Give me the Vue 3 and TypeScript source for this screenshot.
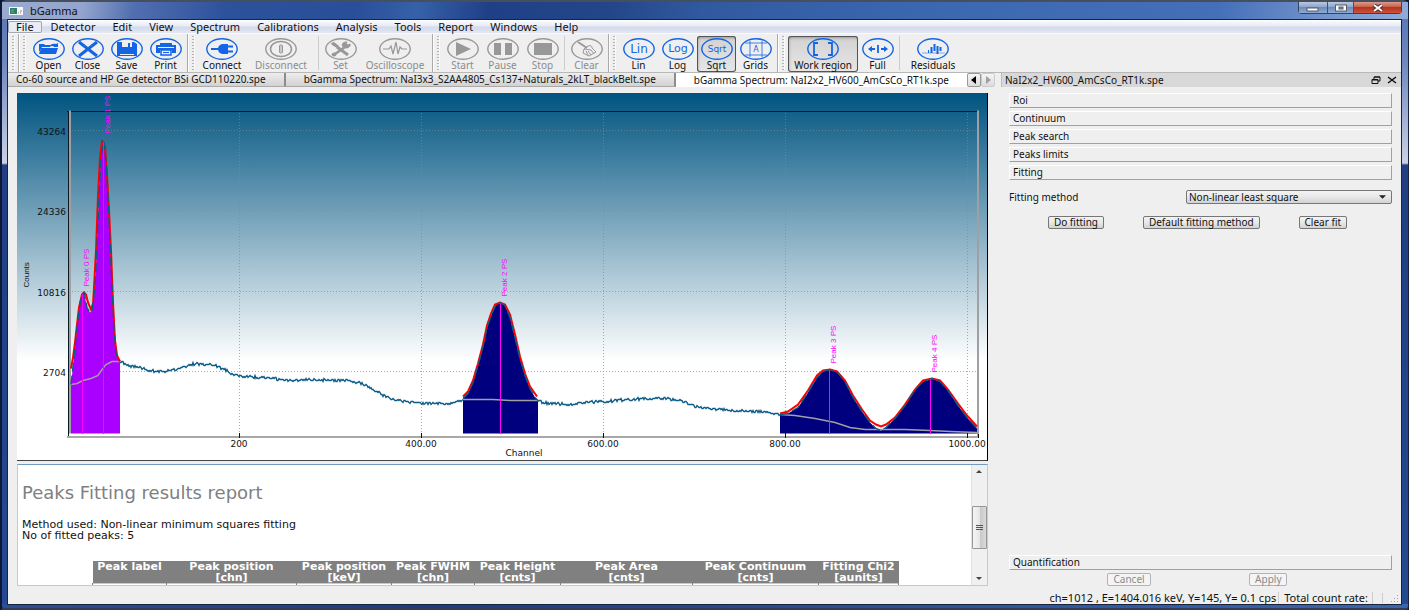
<script setup lang="ts">
import { ref } from 'vue'

type Point = [number, number]

interface Tool {
  icon: string
  label: string
  size: string
  disabled?: boolean
  pressed?: boolean
  divider?: boolean
}

const menus = ['File', 'Detector', 'Edit', 'View', 'Spectrum', 'Calibrations', 'Analysis', 'Tools', 'Report', 'Windows', 'Help']

const toolGroups: Tool[][] = [
  [
    { icon: 'open', label: 'Open', size: 'small' },
    { icon: 'close', label: 'Close', size: 'small' },
    { icon: 'save', label: 'Save', size: 'small' },
    { icon: 'print', label: 'Print', size: 'small' },
  ],
  [
    { icon: 'connect', label: 'Connect', size: 'medium' },
    { icon: 'disconnect', label: 'Disconnect', size: 'large', disabled: true, divider: true },
    { icon: 'set', label: 'Set', size: 'small', disabled: true },
    { icon: 'scope', label: 'Oscilloscope', size: 'large', disabled: true },
  ],
  [
    { icon: 'start', label: 'Start', size: 'small', disabled: true },
    { icon: 'pause', label: 'Pause', size: 'normal', disabled: true },
    { icon: 'stop', label: 'Stop', size: 'small', disabled: true, divider: true },
    { icon: 'clear', label: 'Clear', size: 'small', disabled: true },
  ],
  [
    { icon: 'lin', label: 'Lin', size: 'small' },
    { icon: 'log', label: 'Log', size: 'small' },
    { icon: 'sqrt', label: 'Sqrt', size: 'small', pressed: true },
    { icon: 'grids', label: 'Grids', size: 'small' },
  ],
  [
    { icon: 'region', label: 'Work region', size: 'large', pressed: true },
    { icon: 'full', label: 'Full', size: 'small', divider: true },
    { icon: 'residuals', label: 'Residuals', size: 'wide' },
  ],
]

const tabs = [
  'Co-60 source and HP Ge detector BSi GCD110220.spe',
  'bGamma Spectrum: NaI3x3_S2AA4805_Cs137+Naturals_2kLT_blackBelt.spe',
  'bGamma Spectrum: NaI2x2_HV600_AmCsCo_RT1k.spe',
]
const activeTab = ref(2)

const sections = ['Roi', 'Continuum', 'Peak search', 'Peaks limits', 'Fitting']
const method = ref('Non-linear least square')

const columns = [
  { name: 'Peak label', unit: '', width: 74 },
  { name: 'Peak position', unit: '[chn]', width: 130 },
  { name: 'Peak position', unit: '[keV]', width: 95 },
  { name: 'Peak FWHM', unit: '[chn]', width: 83 },
  { name: 'Peak Height', unit: '[cnts]', width: 86 },
  { name: 'Peak Area', unit: '[cnts]', width: 132 },
  { name: 'Peak Continuum', unit: '[cnts]', width: 126 },
  { name: 'Fitting Chi2', unit: '[aunits]', width: 80 },
]

const yTicks = [
  { y: 130, text: '43264' },
  { y: 210, text: '24336' },
  { y: 291, text: '10816' },
  { y: 371, text: '2704' },
]
const xTicks = [
  { x: 239, text: '200' },
  { x: 421, text: '400.00' },
  { x: 603, text: '600.00' },
  { x: 785, text: '800.00' },
  { x: 967, text: '1000.00' },
]

const low: Point[] = [[71, 384], [74, 357], [77, 327], [80, 303], [82, 294], [84, 292], [87, 307], [90, 312], [92, 310], [95, 287], [97, 245], [99, 197], [101, 157], [103, 141], [104, 142], [106, 160], [108, 195], [110, 240], [112, 285], [114, 327], [116, 353], [120, 361]]
const lowFit: Point[] = [[71, 368], [73, 357], [75, 342], [77, 324], [79, 307], [82, 294], [84, 292], [86, 294], [88, 302], [91, 309], [93, 303], [94, 287], [96, 250], [98, 195], [100, 157], [102, 141], [105, 146], [107, 175], [109, 210], [111, 250], [113, 302], [115, 340], [117, 355], [120, 361]]
const mid: Point[] = [[463, 398], [468, 393], [473, 382], [478, 365], [483, 346], [487, 327], [492, 313], [496, 304], [500, 302], [505, 305], [510, 317], [515, 337], [520, 358], [525, 375], [530, 388], [535, 397], [538, 400]]
const midFit: Point[] = [[463, 396], [468, 391], [473, 380], [478, 363], [483, 344], [487, 325], [491, 313], [495, 304], [500, 302], [505, 304], [510, 314], [515, 334], [520, 356], [525, 373], [530, 386], [537, 396]]
const high: Point[] = [[780, 414], [788, 413], [798, 407], [808, 392], [817, 377], [823, 371], [830, 369], [837, 371], [845, 381], [853, 397], [862, 411], [870, 422], [876, 428], [881, 430], [886, 427], [895, 418], [905, 405], [915, 389], [923, 381], [932, 378], [940, 381], [948, 390], [958, 405], [967, 417], [977, 428]]
const highFit: Point[] = [[780, 413], [788, 411], [798, 404], [808, 390], [817, 375], [823, 370], [830, 369], [837, 371], [845, 380], [853, 395], [862, 409], [870, 420], [876, 424], [881, 426], [886, 424], [895, 417], [905, 404], [915, 389], [923, 380], [932, 378], [940, 380], [948, 389], [958, 403], [967, 415], [977, 426]]

const tailA: Point[] = [[120, 361], [128, 365], [140, 367], [150, 370], [165, 371], [178, 369], [190, 364], [196, 363], [205, 364], [214, 364], [222, 368], [232, 373], [240, 376], [262, 377], [290, 380], [310, 379], [345, 380], [362, 383], [378, 392], [390, 398], [400, 400], [421, 403], [435, 403], [452, 403], [463, 399]]
const tailB: Point[] = [[538, 400], [543, 402], [552, 403], [570, 404], [585, 402], [605, 401], [625, 399], [650, 398], [665, 398], [680, 400], [695, 406], [710, 408], [735, 410], [760, 411], [780, 414]]

const continuum: Point[][] = [
  [[71, 384], [77, 383], [83, 380], [91, 378], [98, 375], [102, 369], [106, 364], [112, 361], [120, 361]],
  [[463, 399], [493, 399], [510, 400], [538, 400]],
  [[780, 414], [795, 415], [815, 418], [835, 422], [850, 427], [865, 429], [880, 429], [905, 429], [930, 430], [950, 431], [977, 432]],
]

const peaks = [
  { x: 82, top: 293, label: 'Peak 0 PS', textX: 89, textY: 286 },
  { x: 103, top: 141, label: 'Peak 1 PS', textX: 110, textY: 133 },
  { x: 500, top: 302, label: 'Peak 2 PS', textX: 507, textY: 296 },
  { x: 829, top: 369, label: 'Peak 3 PS', textX: 836, textY: 363 },
  { x: 930, top: 378, label: 'Peak 4 PS', textX: 937, textY: 372 },
]

const line = (points: Point[]): string => points.map((p) => p.join(',')).join(' ')
const area = (points: Point[]): string =>
  `${points[0][0]},433 ${line(points)} ${points[points.length - 1][0]},433`

/* Counting noise: one rounded sample per pixel along the smooth baseline. */
function noisy(points: Point[]): string {
  const out: Point[] = []
  let seed = 17
  for (let i = 0; i < points.length - 1; i++) {
    const [x0, y0] = points[i]
    const [x1, y1] = points[i + 1]
    for (let x = x0; x < x1; x++) {
      seed = (seed * 1103515245 + 12345) % 2147483648
      const jitter = (seed / 2147483648 - 0.5) * 2.6
      out.push([x, Math.round(y0 + ((y1 - y0) * (x - x0)) / (x1 - x0) + jitter)])
    }
  }
  out.push(points[points.length - 1])
  return line(out)
}
</script>

<template>
  <div class="window">
    <header class="titlebar">
      <svg class="app-icon" viewBox="0 0 14 8" aria-hidden="true">
        <rect width="14" height="8" fill="#f4f6f8" />
        <rect x="1" y="1" width="7" height="6" fill="#2f7d6b" />
        <rect x="2" y="2" width="3" height="4" fill="#3f9a78" />
        <path d="M9 6h1M11 6h1M12 3v2" stroke="#8a8a9a" />
      </svg>
      <h1 class="app-name">bGamma</h1>
      <div class="window-buttons">
        <button class="win-btn minimise" aria-label="Minimize">
          <svg viewBox="0 0 14 8"><rect x="1" y="4" width="11" height="3" fill="#fff" stroke="#555b6b" /></svg>
        </button>
        <button class="win-btn maximise" aria-label="Maximize">
          <svg viewBox="0 0 14 8"><rect x="1.500" y="1" width="11" height="6" fill="#fff" stroke="#555b6b" /><rect x="5" y="3" width="4" height="2" fill="#8093b8" stroke="#555b6b" /></svg>
        </button>
        <button class="win-btn quit" aria-label="Close window">
          <svg viewBox="0 0 14 8"><path d="M3 1l8 6M11 1l-8 6" stroke="#4a3038" stroke-width="4" /><path d="M3 1l8 6M11 1l-8 6" stroke="#fff" stroke-width="2" /></svg>
        </button>
      </div>
    </header>

    <div class="client">
      <nav class="menubar">
        <button v-for="(menu, i) in menus" :key="menu" class="menu" :class="{ hot: i === 0 }">{{ menu }}</button>
      </nav>

      <div class="toolbar">
        <span class="handle first"></span>
        <div v-for="(group, g) in toolGroups" :key="g" class="tool-group">
          <span class="handle"></span>
          <template v-for="tool in group" :key="tool.label">
            <button class="tool" :class="[tool.size, { pressed: tool.pressed }]" :disabled="tool.disabled">
              <svg class="tool-icon" viewBox="0 0 32 22" fill="none" stroke="currentColor" aria-hidden="true">
                <ellipse cx="16" cy="11" rx="15.200" ry="10.200" stroke-width="1.400" />
                <g v-if="tool.icon === 'open'" fill="currentColor" stroke="none">
                  <path d="M6 6h5l1 1h5v2H9l-3 5z" />
                  <path d="M8 10h17l-2 6H6z" />
                  <path d="M15 9c3-3 5-4 8-3l2-1v4h-5l1-1c-2 0-3 0-6 1z" />
                </g>
                <path v-else-if="tool.icon === 'close'" d="M7 4l18 14M25 4L7 18" stroke-width="3" />
                <g v-else-if="tool.icon === 'save'">
                  <path d="M6 4h17l3 2v12H6z" fill="currentColor" stroke="none" />
                  <path d="M11 4h10v5H11z" fill="#efefef" stroke="none" />
                  <path d="M17 5h2v4h-2z" fill="currentColor" stroke="none" />
                  <path d="M9 16.500h14" stroke="#efefef" />
                </g>
                <g v-else-if="tool.icon === 'print'">
                  <path d="M10 5h12v3H10zM6 7h4v1h12V7h4v8h-4v-3H10v3H6z" fill="currentColor" stroke="none" />
                  <path d="M11 12h10v5H11z" fill="#efefef" stroke-width="1.500" />
                  <path d="M8 9.500h16" stroke="#efefef" />
                  <path d="M13 14.500h6" />
                </g>
                <g v-else-if="tool.icon === 'connect'">
                  <path d="M5 11h9M21 8.500h6M21 13.500h6" stroke-width="2" />
                  <path d="M22 6v10h-4c-4 0-6-2-6-5s2-5 6-5z" fill="currentColor" stroke="none" />
                </g>
                <g v-else-if="tool.icon === 'disconnect'">
                  <ellipse cx="16" cy="11" rx="10.500" ry="7.500" stroke-width="1.500" />
                  <rect x="14.500" y="7" width="3" height="8" rx="1" fill="#c8c8c8" />
                </g>
                <g v-else-if="tool.icon === 'set'">
                  <path d="M12 9l11 8" stroke-width="3" />
                  <path d="M20 9L10 16" stroke-width="2.500" />
                  <path d="M25 6a4 3 0 1 1-3-2l-1 2 2 1z" fill="currentColor" />
                  <path d="M6 5l3-1 5 4-2 2-5-3z" fill="currentColor" stroke="none" />
                  <ellipse cx="9" cy="16.500" rx="2" ry="1.500" fill="currentColor" />
                </g>
                <path v-else-if="tool.icon === 'scope'" d="M4 11h6l2-3 2 8 3-12 2 12 2-7 2 2h5" stroke-width="1.200" />
                <path v-else-if="tool.icon === 'start'" d="M9 4v14l15-7z" fill="currentColor" stroke="none" />
                <path v-else-if="tool.icon === 'pause'" d="M7 5h7v12H7zM18 5h7v12h-7z" fill="currentColor" stroke="none" />
                <path v-else-if="tool.icon === 'stop'" d="M7 5h18v12H7z" fill="currentColor" stroke="none" />
                <g v-else-if="tool.icon === 'clear'">
                  <path d="M7 4l9 6" stroke-width="2" />
                  <path d="M17 8c3-1 4 0 4 2l4 4-7 4-6-3 1-4z" />
                  <path d="M13 11l7 1M17 13l3 4M15 13l2 4M20 12l3 4" />
                </g>
                <text v-else-if="tool.icon === 'lin'" class="glyph big" x="16" y="15">Lin</text>
                <text v-else-if="tool.icon === 'log'" class="glyph large" x="16" y="14">Log</text>
                <text v-else-if="tool.icon === 'sqrt'" class="glyph" x="16" y="14">Sqrt</text>
                <g v-else-if="tool.icon === 'grids'">
                  <path d="M10 3v16M22 3v16M5 5h22M5 17h22" stroke-width=".800" />
                  <text class="glyph tiny" x="16" y="14">A</text>
                </g>
                <path v-else-if="tool.icon === 'region'" d="M11 5H7v12h4M21 5h4v12h-4" stroke-width="1.800" />
                <g v-else-if="tool.icon === 'full'">
                  <path d="M16 7v8M8 11h5M19 11h5" stroke-width="1.800" />
                  <path d="M6 11l4-3v6zM26 11l-4-3v6z" fill="currentColor" stroke="none" />
                </g>
                <g v-else>
                  <path d="M5 15h23" stroke-width=".500" />
                  <path d="M14.500 9v6M17.500 6v7M20.500 8v8M23.500 9v4" stroke-width="2" />
                  <path d="M11.500 12v3" />
                </g>
              </svg>
              <span class="tool-label">{{ tool.label }}</span>
            </button>
            <span v-if="tool.divider" class="divider"></span>
          </template>
        </div>
      </div>

      <main class="body">
        <section class="workspace">
          <div class="tabstrip">
            <button v-for="(tab, i) in tabs" :key="tab" class="tab" :class="{ active: i === activeTab }" @click="activeTab = i">{{ tab }}</button>
            <button class="tab-scroll" aria-label="Scroll tabs left">
              <svg viewBox="0 0 8 8"><path d="M6 0v8L1 4z" fill="#000" /></svg>
            </button>
            <button class="tab-scroll off" aria-label="Scroll tabs right" disabled>
              <svg viewBox="0 0 8 8"><path d="M2 0v8l5-4z" fill="#a0a0a0" /></svg>
            </button>
          </div>

          <div class="chart">
            <svg class="plot" viewBox="17 93 970 366" role="img" aria-label="Spectrum counts by channel">
              <g class="grid">
                <line v-for="t in yTicks" :key="t.y" x1="69" x2="978" :y1="t.y" :y2="t.y" />
                <line v-for="t in xTicks" :key="t.x" :x1="t.x" :x2="t.x" y1="112" y2="433" />
              </g>
              <path class="frame" d="M67 111H979M68 111V437" />
              <path class="axis" d="M67 436.500H979" />
              <path class="cursor" d="M70 110V433M978 110V437" />
              <path class="tick" d="M239 432v5M421 432v5M603 432v5M785 432v5M967 432v5M978 433v4" />
              <polygon class="low" :points="area(low)" />
              <polygon class="roi" :points="area(mid)" />
              <polygon class="roi" :points="area(high)" />
              <polyline class="spectrum" :points="noisy(tailA)" />
              <polyline class="spectrum" :points="noisy(tailB)" />
              <polyline v-for="(c, i) in continuum" :key="i" class="continuum" :points="line(c)" />
              <polyline v-for="(c, i) in [lowFit, midFit, highFit]" :key="i" class="fit" :points="line(c)" />
              <polyline v-for="(c, i) in [low, mid, high]" :key="i" class="edge" :points="line(c)" />
              <g v-for="p in peaks" :key="p.label">
                <line class="marker" :x1="p.x" :x2="p.x" :y1="p.top" y2="433" />
                <text class="peak-label" :transform="`translate(${p.textX} ${p.textY}) rotate(-90)`">{{ p.label }}</text>
              </g>
              <text v-for="t in yTicks" :key="t.text" class="scale end" x="66" :y="t.y + 4">{{ t.text }}</text>
              <text v-for="t in xTicks" :key="t.text" class="scale mid" :x="t.x" y="446">{{ t.text }}</text>
              <text class="scale mid" x="524" y="455">Channel</text>
              <text class="counts" transform="translate(29 287) rotate(-90)">Counts</text>
            </svg>
          </div>

          <div class="report">
            <div class="report-page">
              <h2>Peaks Fitting results report</h2>
              <p>Method used: Non-linear minimum squares fitting<br />No of fitted peaks: 5</p>
              <table>
                <colgroup>
                  <col v-for="(c, i) in columns" :key="i" :style="{ width: c.width + 'px' }" />
                </colgroup>
                <thead>
                  <tr>
                    <th v-for="(c, i) in columns" :key="i" scope="col">{{ c.name }}<br />{{ c.unit }}</th>
                  </tr>
                </thead>
                <tbody>
                  <tr><td v-for="(c, i) in columns" :key="i"></td></tr>
                </tbody>
              </table>
            </div>
            <div class="scrollbar" aria-hidden="true">
              <svg class="arrow" viewBox="0 0 8 4"><path d="M1 4h6L4 1z" fill="#444" /></svg>
              <div class="thumb"><i></i><i></i><i></i></div>
              <svg class="arrow" viewBox="0 0 8 4"><path d="M1 0h6L4 3z" fill="#444" /></svg>
            </div>
          </div>
        </section>

        <aside class="dock">
          <div class="dock-title">
            <h2>NaI2x2_HV600_AmCsCo_RT1k.spe</h2>
            <button class="dock-btn" aria-label="Float panel">
              <svg viewBox="0 0 10 8" fill="none" stroke="#111"><path d="M3 3V1h6v4H7" /><path d="M1 3.500h6v4H1zM1 4h6M3 1h6" /></svg>
            </button>
            <button class="dock-btn" aria-label="Close panel">
              <svg viewBox="0 0 10 8" fill="none" stroke="#111" stroke-width="1.500"><path d="M1 1l8 6M9 1L1 7" /></svg>
            </button>
          </div>
          <div class="dock-body">
            <div class="sections">
              <button v-for="s in sections" :key="s" class="section">{{ s }}</button>
            </div>
            <div class="method-row">
              <label for="method">Fitting method</label>
              <div class="select-box">
                <select id="method" v-model="method">
                  <option>Non-linear least square</option>
                </select>
                <svg class="select-arrow" viewBox="0 0 8 4" aria-hidden="true"><path d="M0 0h8L4 4z" fill="#222" /></svg>
              </div>
            </div>
            <div class="actions">
              <button class="push">Do fitting</button>
              <button class="push">Default fitting method</button>
              <button class="push">Clear fit</button>
            </div>
            <button class="section last">Quantification</button>
            <div class="actions confirm">
              <button class="push" disabled>Cancel</button>
              <button class="push" disabled>Apply</button>
            </div>
          </div>
        </aside>
      </main>

      <footer class="statusbar">
        <span class="cell">ch=1012 , E=1404.016 keV, Y=145, Y= 0.1 cps</span>
        <span class="cell">Total count rate:</span>
        <span class="cell blank"></span>
        <svg class="grip" viewBox="0 0 8 8" aria-hidden="true"><path d="M6 0h1v1H6zM3 3h1v1H3zM6 3h1v1H6zM0 6h1v1H0zM3 6h1v1H3zM6 6h1v1H6z" fill="#a8a8a8" /></svg>
      </footer>
    </div>
  </div>
</template>

<style>
body {
  margin: 0;
  background: #0b1638;
}
</style>

<style scoped>
* {
  box-sizing: border-box;
}
button,
select {
  margin: 0;
  padding: 0;
  border: 0;
  background: none;
  color: inherit;
  font: inherit;
}
h1,
h2,
p {
  margin: 0;
  font-weight: normal;
  font-size: inherit;
}
.window {
  display: flex;
  flex-direction: column;
  height: 100vh;
  padding: 0 6px 3px 5px;
  border: 1px solid #17233f;
  border-top: 2px solid #454f5e;
  border-bottom: 2px solid #343b58;
  border-left: 2px solid #0d1838;
  border-radius: 6px 6px 4px 4px;
  background:
    linear-gradient(90deg, #2b4f93, #1d3c80 30%, #2b559f 70%, #3b66ad) bottom / 100% 4px no-repeat,
    linear-gradient(#5474b4, #6f88be 60px, #c9d1e6 161px, #8192bc 162px, #213f82 163px, #244a90 100%);
  font: 10px/12px "Noto Sans", "DejaVu Sans", sans-serif;
  color: #111;
}
.titlebar {
  display: flex;
  align-items: center;
  height: 17px;
  margin: 0 -6px 0 -5px;
  padding-left: 7px;
  background: linear-gradient(100deg, #9aa9ce 0, #94a5cd 80px, #526fb0 130px, #2d529c 220px, #2a4f9a 350px, #3661a8 410px, #1f4087 480px, #234689 600px, #31599f 690px, #3b67b1 900px, #456fb8 1200px, #7d9dd0 1330px, #8fabd8);
}
.app-icon {
  width: 14px;
  height: 8px;
  margin-right: 7px;
}
.app-name {
  font-size: 11px;
  line-height: 15px;
}
.window-buttons {
  display: flex;
  align-self: flex-start;
  height: 12px;
  margin-left: auto;
  margin-right: 6px;
  border: 1px solid #36435f;
  border-top: 0;
  border-radius: 0 0 4px 4px;
}
.win-btn {
  display: flex;
  align-items: center;
  justify-content: center;
  width: 28px;
  background: linear-gradient(#b8c8e2, #8ea6cc 45%, #6e8cbd 50%, #8eabd6);
}
.win-btn.maximise {
  width: 26px;
  border-left: 1px solid #43536f;
}
.win-btn.quit {
  width: 48px;
  border-left: 1px solid #43536f;
  background: linear-gradient(#dc9a8c, #ca5f48 45%, #b3341f 50%, #d0503a);
}
.win-btn svg {
  width: 14px;
  height: 8px;
}
.client {
  display: flex;
  flex: 1;
  flex-direction: column;
  min-height: 0;
  border: 1px solid #1a2338;
  background: #efefef;
}
.menubar {
  display: flex;
  flex: none;
  gap: 1px;
  height: 14px;
  border-top: 1px solid #fff;
  border-bottom: 1px solid #fafafa;
  background: linear-gradient(#f8f9fd, #e9ecf7 40%, #d4daec 50%, #e3e6f4);
  font-size: 11px;
}
.menu {
  padding: 0 8px;
  line-height: 12px;
  border-radius: 2px;
}
.menu.hot {
  box-shadow: inset 0 0 0 1px #a2a6b2;
  background: #e9ecf5;
}
.toolbar {
  display: flex;
  flex: none;
  height: 39px;
  border-bottom: 1px solid #b8b8b8;
}
.handle {
  flex: none;
  width: 3px;
  margin: 2px 3px 2px 4px;
  background: repeating-linear-gradient(#b2b2b2 0 1px, #efefef 1px 3px);
  border-right: 1px solid #fafafa;
}
.tool-group {
  display: flex;
  align-items: flex-start;
  padding-right: 2px;
  border-left: 1px solid #aaa;
  box-shadow: inset 1px 0 #fff;
}
.tool-group .handle {
  align-self: stretch;
}
.tool {
  display: flex;
  flex: none;
  flex-direction: column;
  align-items: center;
  height: 36px;
  margin-top: 2px;
  padding-top: 2px;
  color: #1464e6;
}
.tool.small { width: 39px; }
.tool.normal { width: 41px; }
.tool.medium { width: 48px; }
.tool.wide { width: 62px; }
.tool.large { width: 70px; }
.tool.pressed {
  border-radius: 3px;
  box-shadow: inset 0 0 0 1px #555, inset 1px 2px 3px #999;
  background: linear-gradient(#d2d2d2, #e6e6e6);
}
.tool:disabled {
  color: #989898;
}
.tool-icon {
  width: 32px;
  height: 22px;
  flex: none;
}
.tool-label {
  line-height: 11px;
  color: #111;
  white-space: nowrap;
}
.tool:disabled .tool-label {
  color: #8c8c8c;
}
.divider {
  align-self: stretch;
  width: 1px;
  margin: 2px;
  background: #ccc;
}
.glyph {
  fill: currentColor;
  stroke: none;
  text-anchor: middle;
  font: 9px "DejaVu Sans", sans-serif;
}
.glyph.big { font-size: 12px; }
.glyph.large { font-size: 11px; }
.glyph.tiny { font-size: 8px; }
.body {
  display: grid;
  flex: 1;
  grid-template-columns: minmax(0, 1fr) 400px;
  min-height: 0;
}
.workspace {
  display: flex;
  flex-direction: column;
  min-width: 0;
  min-height: 0;
  padding-bottom: 5px;
}
.tabstrip {
  display: flex;
  flex: none;
  height: 14px;
  margin-right: 3px;
}
.tab {
  padding: 0 18px;
  line-height: 13px;
  white-space: nowrap;
  border-right: 2px solid #8c8c8c;
  border-bottom: 1px solid #aaa;
  background: linear-gradient(#ededed, #d2d2d2);
}
.tab:first-child {
  padding-left: 8px;
}
.tab.active {
  border: 0;
  background: #fff;
}
.tab-scroll {
  width: 14px;
  border: 1px solid #9a9a9a;
  border-radius: 2px;
  background: linear-gradient(#f5f5f5, #dcdcdc);
}
.tab-scroll.off {
  border-color: #ccc;
}
.tab-scroll svg {
  display: block;
  width: 8px;
  height: 8px;
  margin: 0 auto;
}
.chart {
  flex: 1;
  min-height: 0;
  margin: 6px 13px 3px 9px;
  border-right: 1px solid #000;
  border-bottom: 1px solid #444;
  background: linear-gradient(#005480, #fff 73%);
}
.plot {
  display: block;
  width: 100%;
  height: 100%;
}
.grid line {
  stroke: #888;
  stroke-opacity: 0.7;
  stroke-dasharray: 1 2;
  shape-rendering: crispEdges;
}
.frame {
  fill: none;
  stroke: #0a1a24;
  stroke-width: 1;
  shape-rendering: crispEdges;
}
.axis { stroke: #a8a8a8; stroke-width: 2; }
.cursor { stroke: #a0a0a4; stroke-width: 2; }
.tick { stroke: #111; shape-rendering: crispEdges; }
.low { fill: #aa00ff; }
.roi { fill: #00007f; }
.spectrum,
.continuum,
.edge,
.fit {
  fill: none;
}
.spectrum { stroke: #0b5a86; stroke-width: 1.3; }
.continuum { stroke: #a0a0a4; stroke-width: 1.4; }
.edge { stroke: #0b5a80; stroke-width: 1.4; stroke-dasharray: 9 4; }
.fit { stroke: #f00; stroke-width: 2; }
.marker { stroke: #f0f; stroke-width: 1; shape-rendering: crispEdges; }
.peak-label {
  fill: #f0f;
  font: 8px "Liberation Sans Narrow", "Liberation Sans", sans-serif;
}
.counts {
  fill: #111;
  font: 8px "Liberation Sans Narrow", "Liberation Sans", sans-serif;
}
.scale {
  fill: #111;
  font: 9px "DejaVu Sans", sans-serif;
}
.scale.end { text-anchor: end; }
.scale.mid { text-anchor: middle; }
.report {
  display: flex;
  flex: none;
  height: 122px;
  margin: 0 13px 0 9px;
  border: 1px solid #b3cfe0;
  border-top-color: #6f9cc0;
  background: #fff;
  font-family: "DejaVu Sans", sans-serif;
}
.report-page {
  flex: 1;
  min-width: 0;
  overflow: hidden;
  padding: 17px 0 0 4px;
}
.report-page h2 {
  font-size: 18px;
  line-height: 22px;
  color: #808080;
}
.report-page p {
  margin-top: 15px;
  font-size: 11px;
  line-height: 11px;
}
table {
  width: 806px;
  margin: 20px 0 0 70px;
  table-layout: fixed;
  border-collapse: collapse;
  font-size: 11px;
  line-height: 11px;
}
th {
  padding: 0;
  vertical-align: top;
  white-space: nowrap;
  text-align: center;
  background: #808080;
  color: #fff;
}
td {
  height: 14px;
  border: 1px solid #808080;
  border-top-color: #c8c8c8;
}
.scrollbar {
  display: flex;
  flex: none;
  flex-direction: column;
  align-items: center;
  width: 16px;
  padding: 4px 1px 4px 0;
  border-left: 1px solid #e2e2e2;
  background: #f0f0f0;
}
.arrow {
  flex: none;
  width: 8px;
  height: 4px;
}
.thumb {
  display: flex;
  flex-direction: column;
  align-items: center;
  justify-content: center;
  gap: 1px;
  width: 15px;
  height: 43px;
  margin: 33px 0 auto;
  border: 1px solid #979797;
  border-radius: 1px;
  background: linear-gradient(90deg, #f5f5f5, #e6e6e6 50%, #c8c8c8 55%, #dadada);
}
.thumb i {
  width: 7px;
  height: 1px;
  background: #555;
}
.dock {
  display: flex;
  flex-direction: column;
  min-height: 0;
}
.dock-title {
  display: flex;
  align-items: center;
  height: 14px;
  padding: 0 4px 0 3px;
  gap: 6px;
  border-left: 1px solid #bbb;
  background: #d8d8d8;
}
.dock-title h2 {
  flex: 1;
}
.dock-btn svg {
  display: block;
  width: 10px;
  height: 8px;
}
.dock-body {
  display: flex;
  flex: 1;
  flex-direction: column;
  padding: 6px 9px 5px 8px;
}
.sections {
  display: flex;
  flex-direction: column;
  gap: 3px;
}
.section {
  height: 15px;
  padding-left: 3px;
  line-height: 13px;
  text-align: left;
  border-style: solid;
  border-width: 1px;
  border-color: #fff #a0a0a0 #a0a0a0 #fff;
}
.section.last {
  margin-top: auto;
}
.method-row {
  display: flex;
  align-items: center;
  justify-content: space-between;
  height: 14px;
  margin-top: 10px;
}
.select-box {
  display: flex;
  align-items: center;
  position: relative;
  width: 206px;
}
select {
  appearance: none;
  width: 100%;
  height: 14px;
  padding-left: 2px;
  line-height: 12px;
  border: 1px solid #777;
  border-radius: 2px;
  background: linear-gradient(#f3f3f3, #e8e8e8 50%, #d2d2d2);
}
.select-arrow {
  position: absolute;
  right: 6px;
  width: 7px;
  height: 4px;
}
.actions {
  display: flex;
  justify-content: space-evenly;
  margin-top: 12px;
  padding-right: 6px;
}
.actions.confirm {
  margin-top: 3px;
}
.push {
  height: 13px;
  padding: 0 5px;
  line-height: 11px;
  border: 1px solid #777;
  border-radius: 2px;
  background: linear-gradient(#f3f3f3, #e8e8e8 50%, #d2d2d2);
}
.push:disabled {
  border-color: #b0b4b6;
  background: #f4f4f4;
  color: #8a8a8a;
}
.statusbar {
  display: flex;
  flex: none;
  align-items: center;
  justify-content: flex-end;
  height: 13px;
  font-size: 11px;
  line-height: 12px;
}
.cell {
  padding: 0 4px 0 5px;
  border-right: 1px solid #ccc;
}
.cell:first-child {
  padding-right: 2px;
}
.cell.blank {
  width: 9px;
  height: 10px;
}
.grip {
  width: 8px;
  height: 8px;
  margin: 2px 2px 0 8px;
}
</style>
